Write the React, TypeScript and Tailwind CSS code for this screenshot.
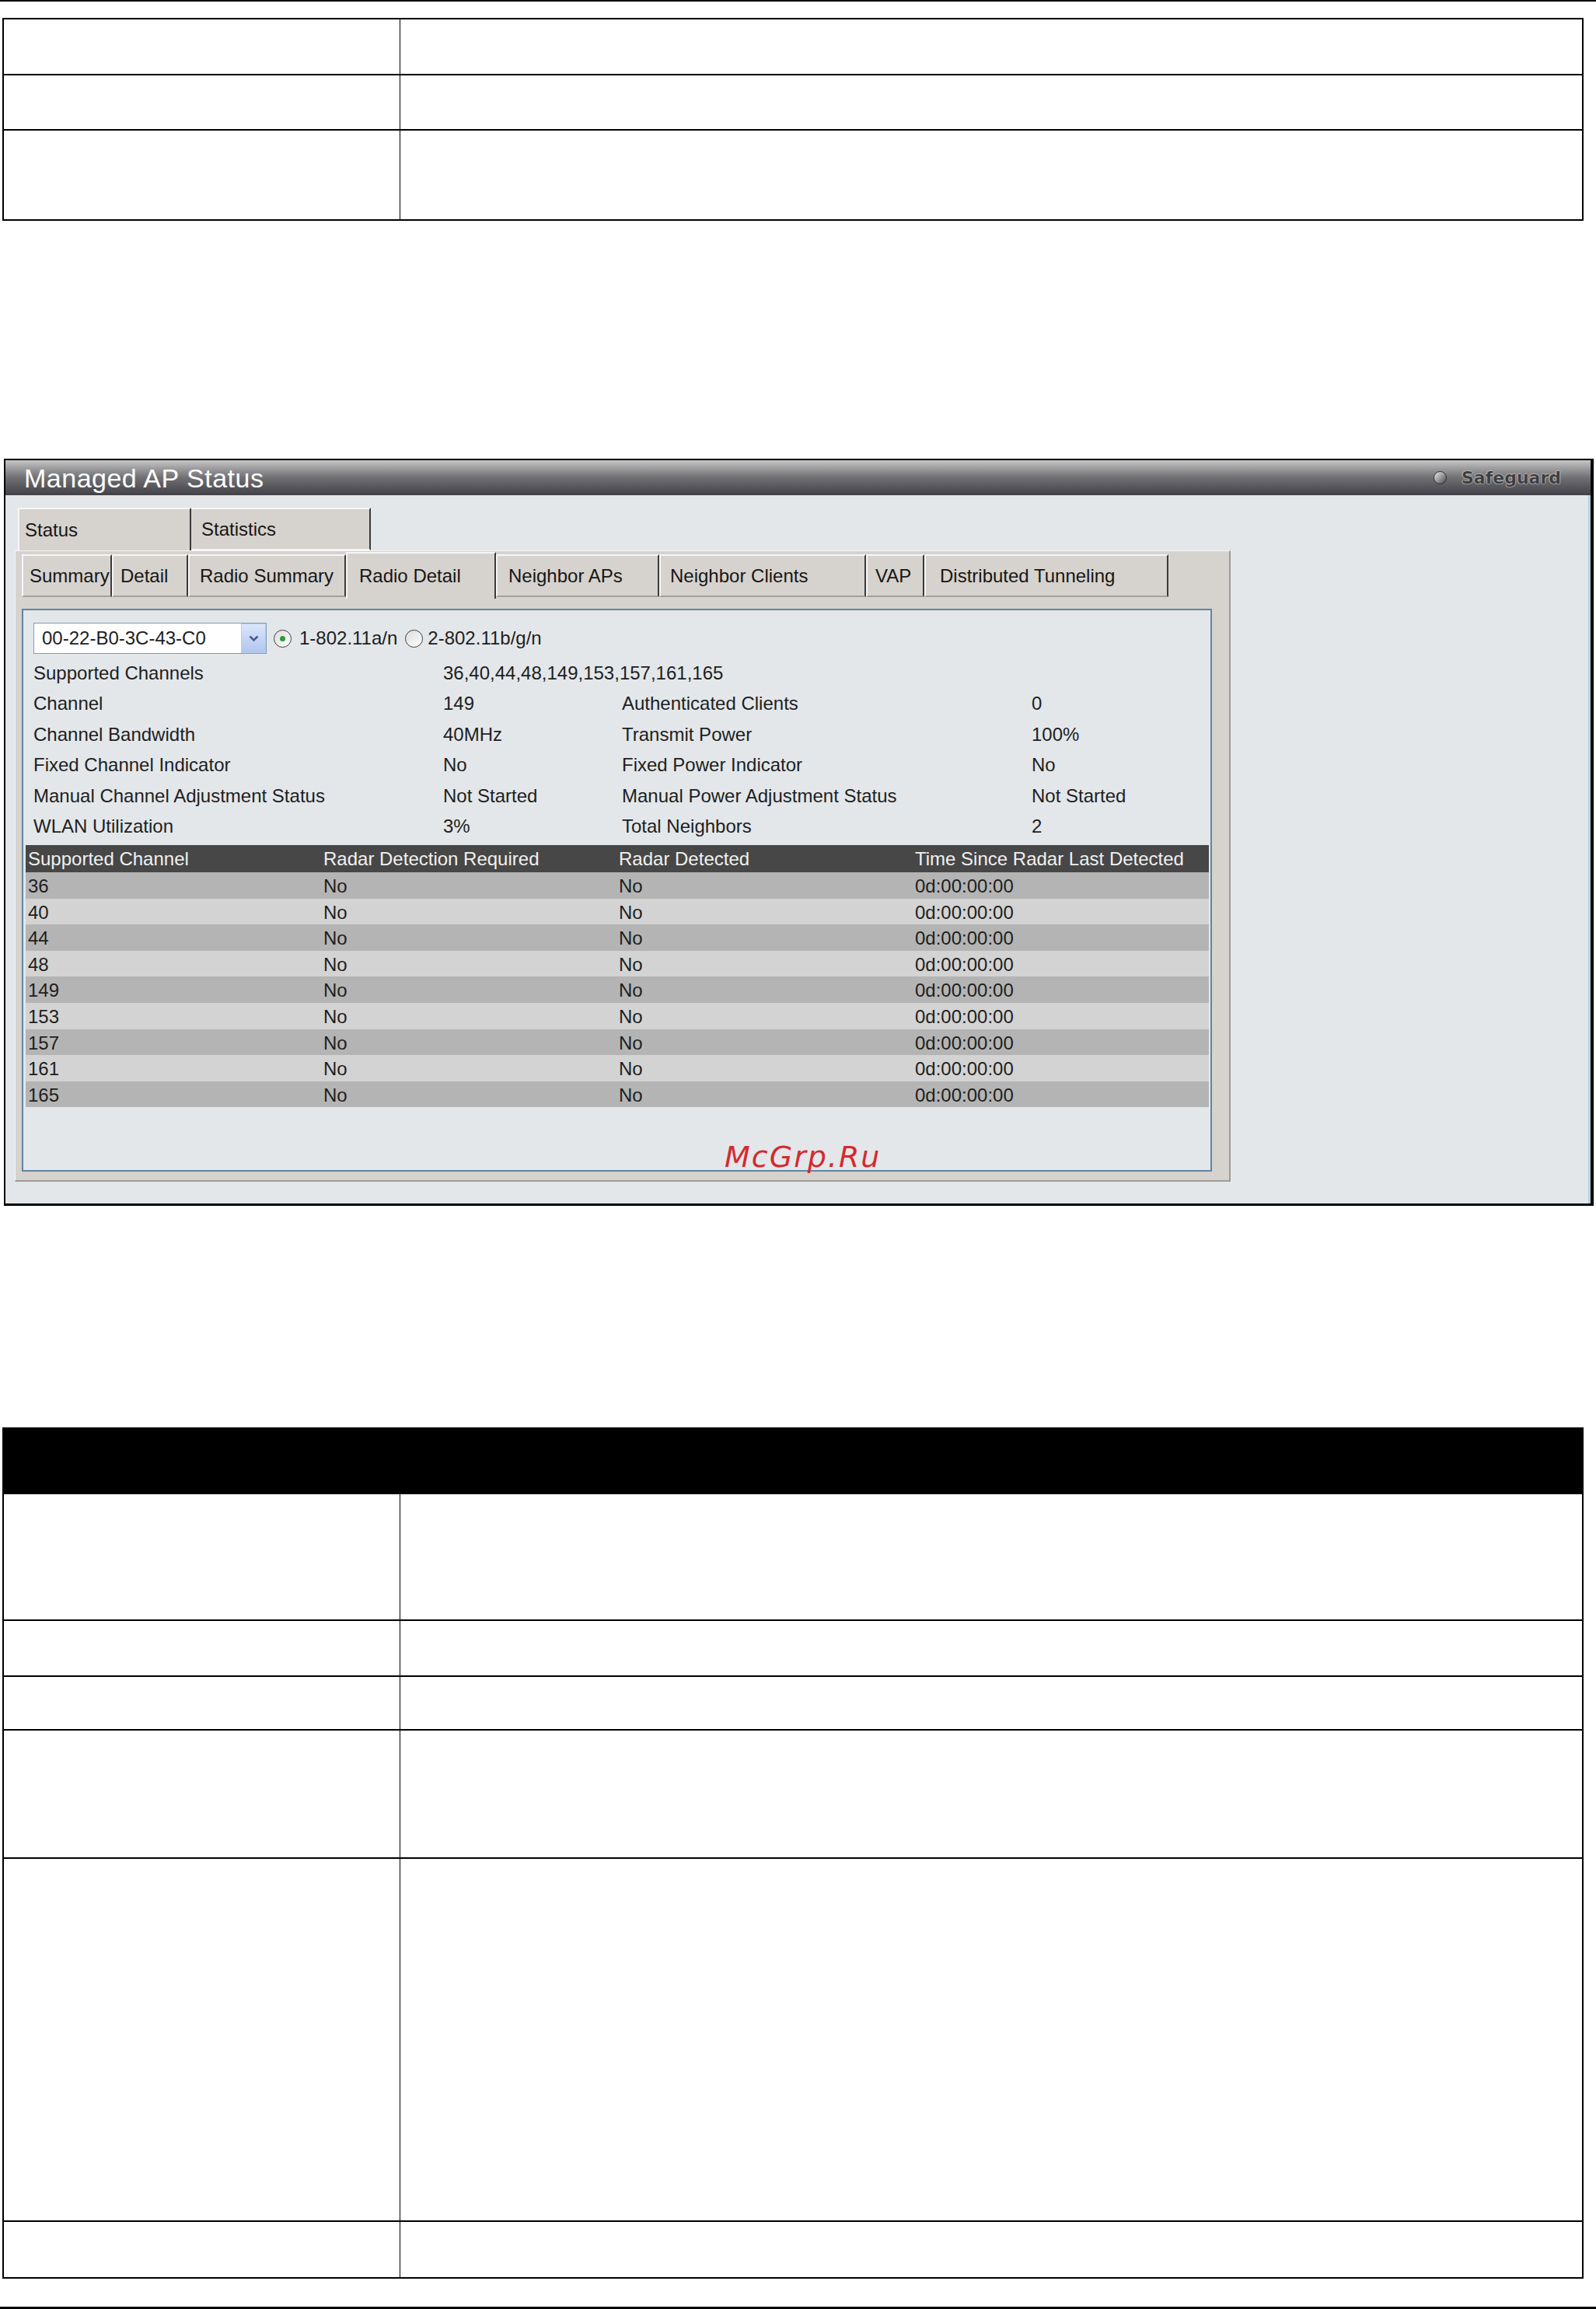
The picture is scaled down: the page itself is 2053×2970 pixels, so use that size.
import clsx from "clsx";

// Manual page: two empty description tables around a "Managed AP Status"
// screenshot (Radio Detail tab). Sizes are taken straight off the page scan.

const SANS = "font-['Liberation_Sans',Arial,sans-serif]";

const subTabs = [
  { label: "Summary", w: "w-[116px]", pl: "pl-[8px]" },
  { label: "Detail", w: "w-[98px]", pl: "pl-[9px]" },
  { label: "Radio Summary", w: "w-[203px]", pl: "pl-[13px]" },
  { label: "Radio Detail", w: "w-[193px]", pl: "pl-[15px]", active: true },
  { label: "Neighbor APs", w: "w-[210px]", pl: "pl-[14px]" },
  { label: "Neighbor Clients", w: "w-[266px]", pl: "pl-[12px]" },
  { label: "VAP", w: "w-[75px]", pl: "pl-[10px]" },
  { label: "Distributed Tunneling", w: "w-[314px]", pl: "pl-[18px]" },
];

const info = [
  ["Channel", "149", "Authenticated Clients", "0"],
  ["Channel Bandwidth", "40MHz", "Transmit Power", "100%"],
  ["Fixed Channel Indicator", "No", "Fixed Power Indicator", "No"],
  [
    "Manual Channel Adjustment Status",
    "Not Started",
    "Manual Power Adjustment Status",
    "Not Started",
  ],
  ["WLAN Utilization", "3%", "Total Neighbors", "2"],
];

const channels = ["36", "40", "44", "48", "149", "153", "157", "161", "165"];

function DocRow({ h, last }: { h: string; last?: boolean }) {
  return (
    <div className={clsx("flex", h, !last && "border-b-2 border-black")}>
      <div className="w-[510px] shrink-0 border-r border-black" />
      <div className="flex-1" />
    </div>
  );
}

function SubTab({
  label,
  w,
  pl,
  active,
}: {
  label: string;
  w: string;
  pl: string;
  active?: boolean;
}) {
  return (
    <div
      className={clsx(
        "flex shrink-0 items-center overflow-hidden whitespace-nowrap border-t-2 border-r-2 border-l-2 border-t-[#f6f6f6] border-r-[#3a3a3a] border-l-[#f6f6f6] bg-[#d6d2cd] text-[24px] text-[#161616]",
        active ? "-mt-[3px] h-[60px]" : "h-[55px] border-b-2 border-b-[#a5a29e]",
        w,
        pl,
      )}
    >
      {label}
    </div>
  );
}

function Radio({ checked }: { checked?: boolean }) {
  return (
    <span className="flex size-[23px] shrink-0 items-center justify-center rounded-full border border-[#3f3f3f] bg-linear-to-br from-[#dcdcdc] to-white">
      {checked && <span className="size-[7px] rounded-full bg-[#2e9c35]" />}
    </span>
  );
}

function ApStatusPanel() {
  return (
    <div className="mt-[306px] ml-[5px] flex h-[961px] w-[2045px] flex-col border-2 border-r-4 border-b-[3px] border-black">
      {/* title bar */}
      <div className="flex h-[45px] shrink-0 items-center justify-between bg-linear-to-b from-[#c6c6c6] via-[#707074] to-[#414147] pr-[38px] pl-[24px]">
        <span className="text-[34px] leading-none tracking-[0.5px] text-white">
          Managed AP Status
        </span>
        <div className="flex items-center gap-[19px]">
          <span className="size-[17px] rounded-full border border-[#2e2e2e] bg-linear-to-br from-[#ececec] via-[#9c9c9c] to-[#4a4a4a]" />
          <span className="font-['DejaVu_Sans',sans-serif] text-[22px] font-bold leading-none text-[#3e3e3e] [text-shadow:0_0_2px_#f4f4f4,0_0_1px_#ffffff]">
            Safeguard
          </span>
        </div>
      </div>

      <div className="flex-1 border-r-[3px] border-[#b4d0e4] bg-[#e3e7ea]">
        {/* Status / Statistics */}
        <div className="mt-[16px] ml-[16px] flex text-[24px] text-[#161616]">
          <div className="flex h-[55px] w-[223px] items-center border-t-2 border-r-2 border-l-2 border-t-[#f6f6f6] border-r-[#3a3a3a] border-l-[#f6f6f6] bg-[#d6d2cd] pl-[7px]">
            Status
          </div>
          <div className="flex h-[55px] w-[231px] items-center border-t-2 border-r-2 border-b-2 border-t-[#f6f6f6] border-r-[#3a3a3a] border-b-[#f6f6f6] bg-[#d6d2cd] pl-[13px]">
            Statistics
          </div>
        </div>

        <div className="ml-[12px] h-[812px] w-[1564px] border-t border-r-2 border-b-2 border-l border-t-[#f4f4f4] border-r-[#9d9b98] border-b-[#9d9b98] border-l-[#f4f4f4] bg-[#d6d2cd] pt-[4px] pl-[8px]">
          <div className="flex items-start">
            {subTabs.map((t) => (
              <SubTab key={t.label} {...t} />
            ))}
          </div>

          <div className="relative mt-[13px] h-[724px] w-[1531px] border-2 border-[#5f86a3] bg-[#e3e7ea] px-[3px] pt-[16px] text-[24px] text-[#1e1e1e]">
            <div className="pl-[10px]">
              <div className="flex h-[40px] items-center">
                <div className="flex h-[40px] w-[300px] items-stretch border border-[#7f9db9] bg-white">
                  <span className="flex items-center pl-[10px]">00-22-B0-3C-43-C0</span>
                  <span className="ml-auto flex w-[32px] items-center justify-center border border-[#bccbeb] bg-linear-to-b from-[#dbe6fc] to-[#b1c5ee]">
                    <svg width="13" height="9" viewBox="0 0 13 9" aria-hidden>
                      <path
                        d="M1.5 1.5 L6.5 6.5 L11.5 1.5"
                        fill="none"
                        stroke="#4a5e8c"
                        strokeWidth="2.6"
                      />
                    </svg>
                  </span>
                </div>
                <span className="ml-[9px]">
                  <Radio checked />
                </span>
                <span className="ml-[10px]">1-802.11a/n</span>
                <span className="ml-[10px]">
                  <Radio />
                </span>
                <span className="ml-[6px]">2-802.11b/g/n</span>
              </div>

              <div className="mt-[5px] grid grid-cols-[527px_230px_527px_1fr]">
                <div className="flex h-[39.5px] items-center">Supported Channels</div>
                <div className="col-span-3 flex h-[39.5px] items-center">
                  36,40,44,48,149,153,157,161,165
                </div>
                {info.map((row) =>
                  row.map((cell, i) => (
                    <div key={row[0] + i} className="flex h-[39.5px] items-center whitespace-nowrap">
                      {cell}
                    </div>
                  )),
                )}
              </div>
            </div>

            <div className="mt-[4px] w-[1522px]">
              <div className="grid h-[35px] grid-cols-[380px_380px_381px_1fr] items-center bg-[#474747] pl-[3px] text-[#f1f1f1]">
                <span>Supported Channel</span>
                <span>Radar Detection Required</span>
                <span>Radar Detected</span>
                <span>Time Since Radar Last Detected</span>
              </div>
              {channels.map((ch, i) => (
                <div
                  key={ch}
                  className={clsx(
                    "grid h-[33.6px] grid-cols-[380px_380px_381px_1fr] items-center pl-[3px]",
                    i % 2 === 0 ? "bg-[#b4b4b4]" : "bg-[#d3d3d3]",
                  )}
                >
                  <span>{ch}</span>
                  <span>No</span>
                  <span>No</span>
                  <span>0d:00:00:00</span>
                </div>
              ))}
            </div>

            <span className="absolute top-[684px] left-[902px] font-['DejaVu_Sans',sans-serif] text-[38px] leading-none tracking-[2px] text-[#d42a2f] italic">
              McGrp.Ru
            </span>
          </div>
        </div>
      </div>
    </div>
  );
}

export default function App() {
  return (
    <div className={clsx("flex h-[2970px] w-[2053px] flex-col bg-white", SANS)}>
      <div className="h-[2px] shrink-0 bg-black" />

      <div className="mt-[21px] ml-[3px] w-[2034px] border-2 border-black">
        <DocRow h="h-[72px]" />
        <DocRow h="h-[71px]" />
        <DocRow h="h-[114px]" last />
      </div>

      <ApStatusPanel />

      <div className="mt-[285px] ml-[3px] w-[2034px] border-2 border-black">
        <div className="h-[84px] bg-black" />
        <DocRow h="h-[163px]" />
        <DocRow h="h-[72px]" />
        <DocRow h="h-[69px]" />
        <DocRow h="h-[165px]" />
        <DocRow h="h-[467px]" />
        <DocRow h="h-[71px]" last />
      </div>

      <div className="mt-auto h-[3px] shrink-0 bg-black" />
    </div>
  );
}
